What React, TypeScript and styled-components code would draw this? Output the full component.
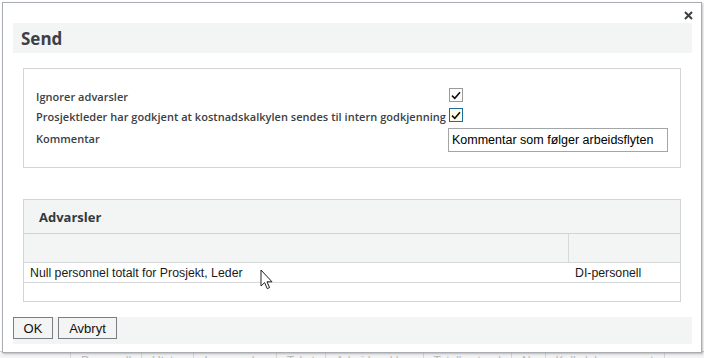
import React from "react";
import styled, { createGlobalStyle } from "styled-components";

const GlobalStyle = createGlobalStyle`
  html, body {
    margin: 0;
    padding: 0;
    background: #ffffff;
  }
  body {
    font-family: "Liberation Sans", Arial, sans-serif;
    color: #333;
  }
  * {
    box-sizing: border-box;
  }
`;

const Page = styled.div`
  position: relative;
  width: 704px;
  height: 358px;
  overflow: hidden;
  background: #ffffff;
`;

// the app window that lies behind the dialog, only its top edge shows
const Backdrop = styled.div`
  position: absolute;
  left: 0;
  right: 0;
  top: 351px;
  height: 16px;
  display: flex;
  background: #f2f2f2;
  border-top: 1px solid #d4d4d4;

  span {
    font-size: 12px;
    color: #b9b9b9;
    padding: 2px 10px 0;
    border-right: 1px solid #d6d6d6;
    white-space: nowrap;
  }
`;

const Dialog = styled.div`
  position: relative;
  margin: 2px 0 0 2px;
  width: 700px;
  height: 351px;
  background: #ffffff;
  border: 1px solid #a9adb1;
  box-shadow: 1px 1px 2px rgba(0, 0, 0, 0.25);
  padding: 20px 9px 0 10px;
  display: flex;
  flex-direction: column;
  z-index: 1;
`;

const CloseButton = styled.button`
  position: absolute;
  top: 5px;
  right: 6px;
  width: 14px;
  height: 14px;
  padding: 0;
  border: none;
  background: transparent;
  display: flex;
  align-items: center;
  justify-content: center;
  cursor: pointer;
`;

const TitleBar = styled.div`
  height: 30px;
  background: #f3f4f4;
  padding-left: 8px;
  display: flex;
  align-items: center;

  h1 {
    margin: 0;
    font-family: "Open Sans", "Liberation Sans", sans-serif;
    font-size: 17px;
    font-weight: 700;
    color: #3b4045;
  }
`;

const FieldBox = styled.div`
  margin: 15px 0 0 10px;
  width: 658px;
  height: 100px;
  border: 1px solid #d2d4d6;
  padding: 18px 0 0 12px;
  display: flex;
  flex-direction: column;
`;

const FieldRow = styled.div<{ $h: number; $gap?: number }>`
  display: flex;
  align-items: center;
  height: ${(p) => p.$h}px;
  margin-bottom: ${(p) => p.$gap ?? 0}px;
`;

const Label = styled.label<{ $top?: number }>`
  width: 412px;
  flex: none;
  font-family: "Open Sans", "Liberation Sans", sans-serif;
  font-size: 11px;
  font-weight: 600;
  letter-spacing: 0.03px;
  color: #3b4045;
  white-space: nowrap;
  align-self: ${(p) => (p.$top !== undefined ? "flex-start" : "center")};
  padding-top: ${(p) => p.$top ?? 2}px;
`;

const Check = styled.span<{ $focus?: boolean }>`
  width: 14px;
  height: 14px;
  margin-left: 1px;
  border: 1px solid ${(p) => (p.$focus ? "#1a6e9e" : "#9a9a9a")};
  background: ${(p) => (p.$focus ? "#fffde6" : "#ffffff")};
  display: flex;
  align-items: center;
  justify-content: center;
`;

const TextInput = styled.input`
  width: 220px;
  height: 24px;
  border: 1px solid #a3a6a9;
  padding: 0 3px;
  font-family: "Liberation Sans", Arial, sans-serif;
  font-size: 12.5px;
  color: #000;
  outline: none;
`;

const WarningPanel = styled.div`
  margin: 31px 0 0 10px;
  width: 658px;
  border: 1px solid #d2d4d6;
  display: flex;
  flex-direction: column;
`;

const PanelHeader = styled.div`
  height: 34px;
  background: #f3f4f4;
  padding-left: 15px;
  display: flex;
  align-items: center;
  border-bottom: 1px solid #d2d4d6;

  h2 {
    margin: 0;
    font-family: "Open Sans", "Liberation Sans", sans-serif;
    font-size: 13px;
    font-weight: 700;
    color: #333a40;
  }
`;

const Table = styled.div`
  display: grid;
  grid-template-columns: 545px 1fr;
`;

const Cell = styled.div<{ $head?: boolean; $h: number; $last?: boolean }>`
  height: ${(p) => p.$h}px;
  background: ${(p) => (p.$head ? "#f3f4f4" : "#ffffff")};
  border-bottom: ${(p) => (p.$last ? "none" : "1px solid #d6d8da")};
  border-right: ${(p) => (p.$head ? "1px solid #d6d8da" : "none")};
  padding-left: 6px;
  display: flex;
  align-items: center;
  font-family: "Liberation Sans", Arial, sans-serif;
  font-size: 12.3px;
  color: #1a1a1a;
  white-space: nowrap;
  &:nth-child(2n) {
    border-right: none;
  }
`;

const Footer = styled.div`
  margin-top: 15px;
  height: 27px;
  background: #f3f4f4;
  display: flex;
  align-items: flex-start;
  gap: 5px;
`;

const Button = styled.button<{ $w: number }>`
  width: ${(p) => p.$w}px;
  height: 22px;
  border: 1px solid #7a7e82;
  background: #f3f4f4;
  font-family: "Liberation Sans", Arial, sans-serif;
  font-size: 13px;
  color: #111;
  padding: 0;
  cursor: pointer;
`;

const Cursor = styled.svg`
  position: absolute;
  left: 260px;
  top: 269px;
  z-index: 2;
`;

const CheckMark = () => (
  <svg width="10" height="9" viewBox="0 0 10 9">
    <path d="M1 4.6 L3.8 7.3 L9 1.2" fill="none" stroke="#111" strokeWidth="1.6" />
  </svg>
);

export default function App() {
  return (
    <Page>
      <GlobalStyle />
      <Dialog>
        <CloseButton aria-label="Lukk">
          <svg width="9" height="9" viewBox="0 0 9 9">
            <path d="M1 1 L8 8 M8 1 L1 8" stroke="#3b4045" strokeWidth="2" />
          </svg>
        </CloseButton>
        <TitleBar>
          <h1>Send</h1>
        </TitleBar>
        <FieldBox>
          <FieldRow $h={16} $gap={4}>
            <Label>Ignorer advarsler</Label>
            <Check>
              <CheckMark />
            </Check>
          </FieldRow>
          <FieldRow $h={16} $gap={5}>
            <Label>Prosjektleder har godkjent at kostnadskalkylen sendes til intern godkjenning</Label>
            <Check $focus>
              <CheckMark />
            </Check>
          </FieldRow>
          <FieldRow $h={24}>
            <Label $top={3}>Kommentar</Label>
            <TextInput defaultValue="Kommentar som følger arbeidsflyten" />
          </FieldRow>
        </FieldBox>
        <WarningPanel>
          <PanelHeader>
            <h2>Advarsler</h2>
          </PanelHeader>
          <Table>
            <Cell $head $h={29} />
            <Cell $head $h={29} />
            <Cell $h={20}>Null personnel totalt for Prosjekt, Leder</Cell>
            <Cell $h={20}>DI-personell</Cell>
            <Cell $h={18} $last />
            <Cell $h={18} $last />
          </Table>
        </WarningPanel>
        <Footer>
          <Button $w={40}>OK</Button>
          <Button $w={59}>Avbryt</Button>
        </Footer>
      </Dialog>
      <Backdrop>
        <span>ressurser</span>
        <span>Personell</span>
        <span>Utstyr</span>
        <span>Leverandør</span>
        <span>Tekst</span>
        <span>Arbeidspakker</span>
        <span>Totalkostnad</span>
        <span>Nr</span>
        <span>Kalkylekomponent</span>
      </Backdrop>
      <Cursor width="14" height="22" viewBox="0 0 14 22">
        <path
          d="M1 1 L1 17 L4.6 13.6 L7.2 19.6 L9.6 18.6 L7 12.8 L12 12.8 Z"
          fill="#ffffff"
          stroke="#222"
          strokeWidth="1"
          strokeLinejoin="round"
        />
      </Cursor>
    </Page>
  );
}
